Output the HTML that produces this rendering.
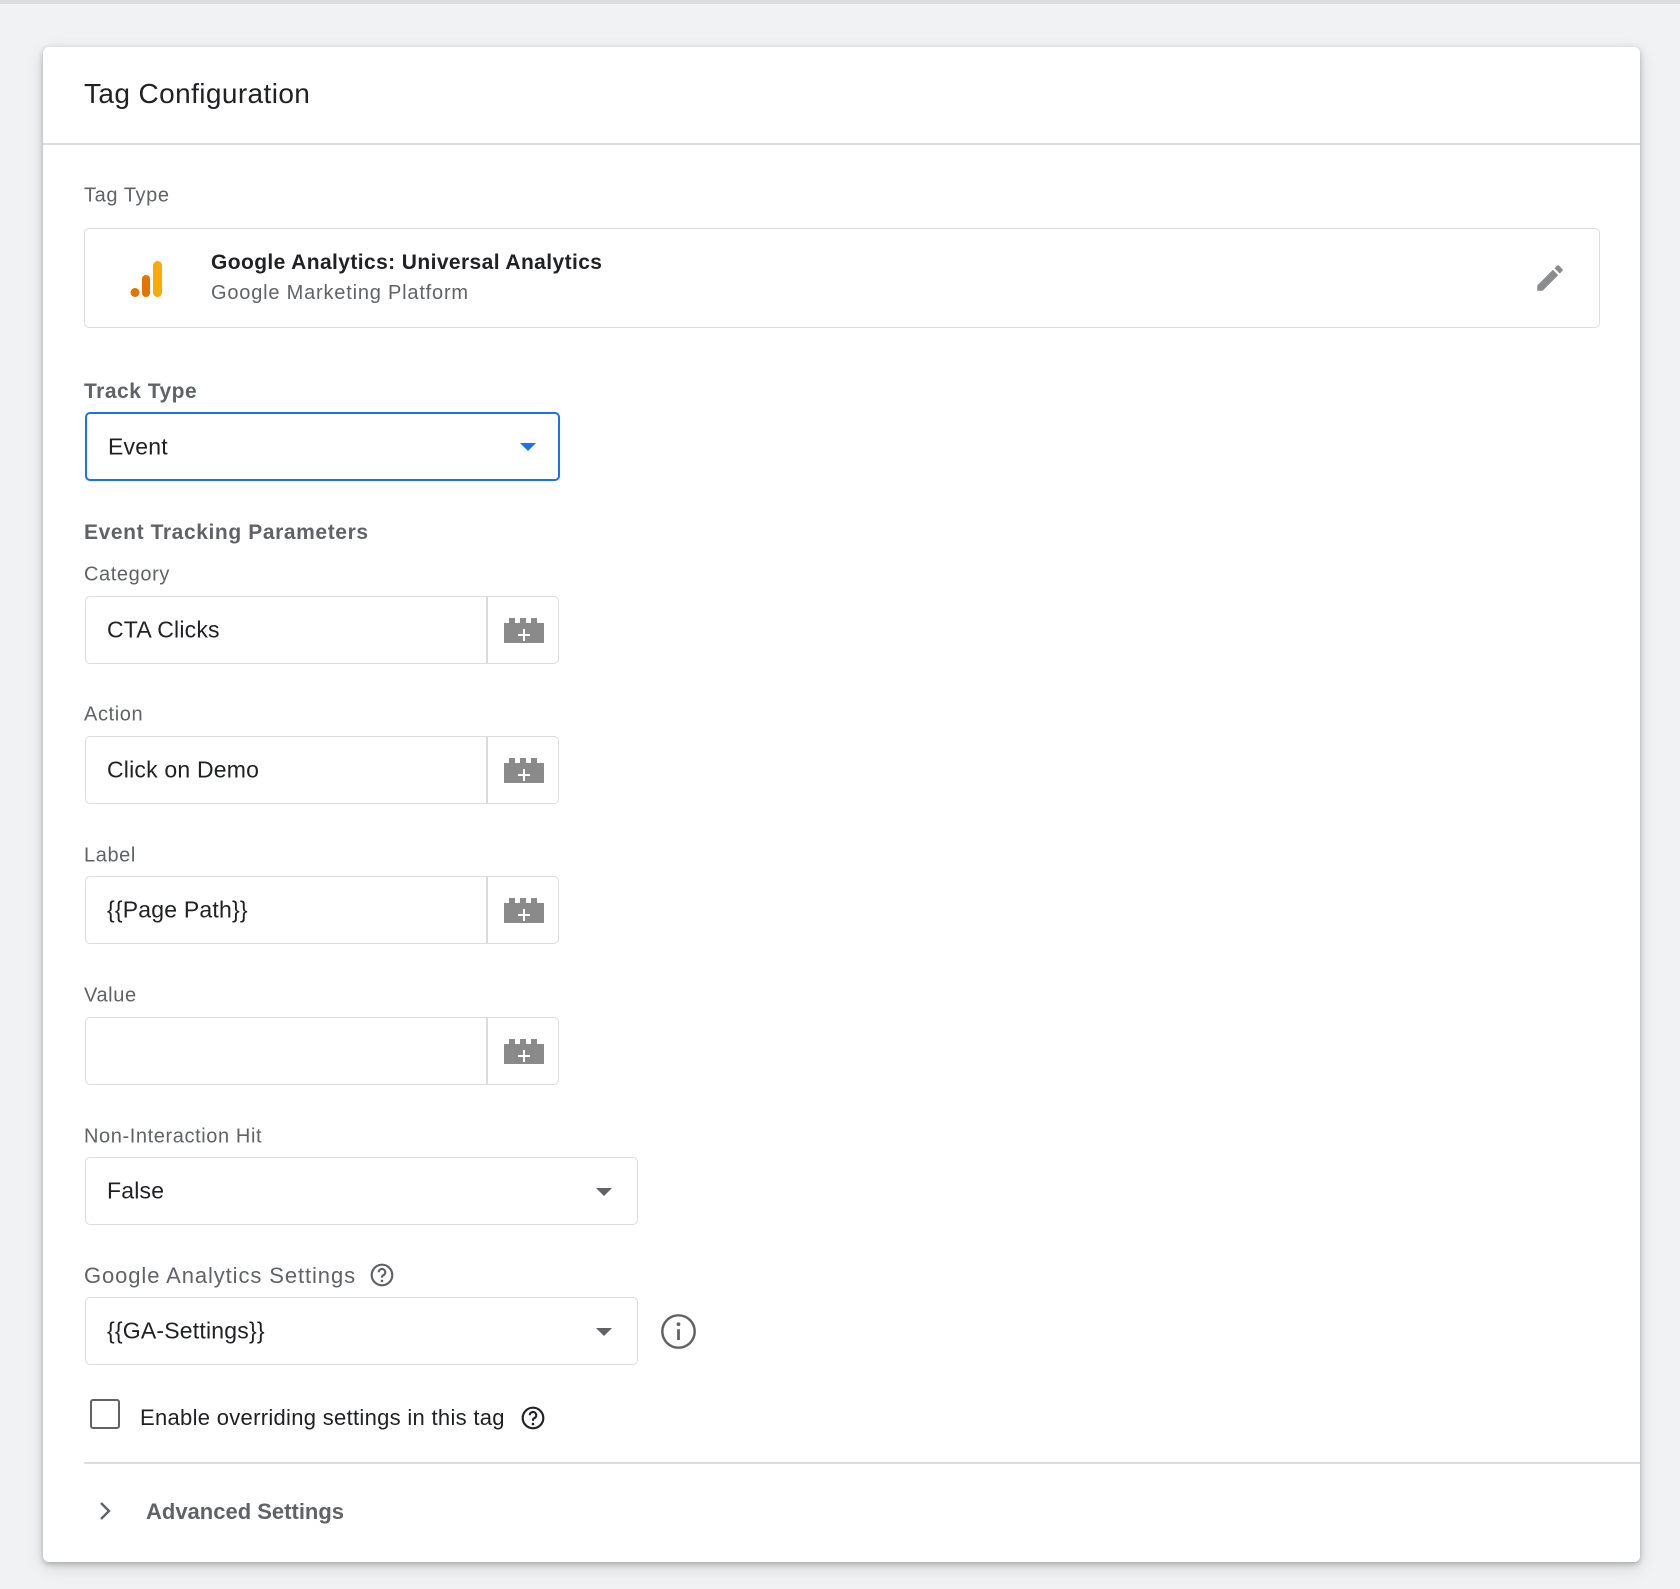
<!DOCTYPE html>
<html><head><meta charset="utf-8"><style>
*{box-sizing:border-box;margin:0;padding:0}
body{width:1680px;height:1589px;background:#f1f2f4;font-family:"Liberation Sans",Arial,sans-serif;position:relative;overflow:hidden;color:#202124}
.topline{position:absolute;left:0;top:0;width:1680px;height:4px;background:#dcdde0}
.card{position:absolute;left:43px;top:47px;width:1597px;height:1515px;background:#fff;border-radius:6px;box-shadow:0 2px 6px rgba(0,0,0,.25),0 6px 18px rgba(0,0,0,.12)}
.a{position:absolute;white-space:nowrap}
.lbl{font-size:20px;color:#5f6368;transform:translateY(-50%);letter-spacing:.6px;margin-top:2px}
.box{position:absolute;border:1.5px solid #dadce0;border-radius:5px;background:#fff}
.val{position:absolute;left:21px;top:50%;transform:translateY(-50%);font-size:23px;color:#202124;letter-spacing:.2px}
.plus{position:absolute;top:0;bottom:0;width:1.5px;background:#dadce0}
</style></head><body>
<div class="topline"></div>
<div class="card"></div>
<div class="a" style="left:84px;top:78px;font-size:28px;color:#202124;letter-spacing:.4px">Tag Configuration</div>
<div class="a" style="left:43px;top:143px;width:1597px;height:1.5px;background:#dadce0"></div>
<div class="a lbl" style="left:84px;top:194px">Tag Type</div>
<div class="box" style="left:84px;top:228px;width:1516px;height:100px">
 <svg style="position:absolute;left:45px;top:30px" width="36" height="40" viewBox="0 0 36 40"><rect x="23" y="2" width="9" height="36" rx="4.5" fill="#f9ab00"/><rect x="12" y="16" width="8" height="22" rx="4" fill="#e37400"/><circle cx="5" cy="33.5" r="4.5" fill="#e37400"/></svg>
 <div class="a" style="left:126px;top:22px;font-size:21px;font-weight:bold;color:#202124;letter-spacing:.4px">Google Analytics: Universal Analytics</div>
 <div class="a" style="left:126px;top:53px;font-size:20px;color:#5f6368;letter-spacing:.8px">Google Marketing Platform</div>
 <svg style="position:absolute;left:1448px;top:32px" width="34" height="34" viewBox="0 0 24 24"><path d="M3 17.25V21h3.75L17.81 9.940l-3.75-3.75L3 17.25zM20.71 7.04a1 1 0 0 0 0-1.41l-2.34-2.340a1 1 0 0 0-1.41 0l-1.83 1.83 3.75 3.75 1.83-1.83z" fill="#8a8c8f"/></svg>
</div>
<div class="a lbl" style="left:84px;top:390px;font-size:21px;font-weight:bold;color:#5f6368;letter-spacing:.5px">Track Type</div>
<div class="box" style="left:85px;top:412px;width:475px;height:69px;border:2.5px solid #1a73e8">
 <div class="val">Event</div>
 <div class="a" style="left:433px;top:29px;width:0;height:0;border-left:8px solid transparent;border-right:8px solid transparent;border-top:8px solid #1a73e8"></div>
</div>
<div class="a lbl" style="left:84px;top:531px;font-size:21px;font-weight:bold;color:#5f6368;letter-spacing:.6px">Event Tracking Parameters</div>

<div class="a lbl" style="left:84px;top:573px">Category</div>
<div class="box" style="left:85px;top:596px;width:474px;height:68px"><div class="val">CTA Clicks</div><div class="plus" style="left:400px"></div>
<svg style="position:absolute;left:418px;top:21px" width="40" height="26" viewBox="0 0 40 26"><path d="M0 5h5V0h6v5h5V0h6v5h5V0h6v5h7v20H0z" fill="#8a8a8a"/><path d="M20 11v12M14 17h12" stroke="#fff" stroke-width="2"/></svg></div>

<div class="a lbl" style="left:84px;top:713px">Action</div>
<div class="box" style="left:85px;top:736px;width:474px;height:68px"><div class="val">Click on Demo</div><div class="plus" style="left:400px"></div>
<svg style="position:absolute;left:418px;top:21px" width="40" height="26" viewBox="0 0 40 26"><path d="M0 5h5V0h6v5h5V0h6v5h5V0h6v5h7v20H0z" fill="#8a8a8a"/><path d="M20 11v12M14 17h12" stroke="#fff" stroke-width="2"/></svg></div>

<div class="a lbl" style="left:84px;top:854px">Label</div>
<div class="box" style="left:85px;top:876px;width:474px;height:68px"><div class="val">{{Page Path}}</div><div class="plus" style="left:400px"></div>
<svg style="position:absolute;left:418px;top:21px" width="40" height="26" viewBox="0 0 40 26"><path d="M0 5h5V0h6v5h5V0h6v5h5V0h6v5h7v20H0z" fill="#8a8a8a"/><path d="M20 11v12M14 17h12" stroke="#fff" stroke-width="2"/></svg></div>

<div class="a lbl" style="left:84px;top:994px">Value</div>
<div class="box" style="left:85px;top:1017px;width:474px;height:68px"><div class="plus" style="left:400px"></div>
<svg style="position:absolute;left:418px;top:21px" width="40" height="26" viewBox="0 0 40 26"><path d="M0 5h5V0h6v5h5V0h6v5h5V0h6v5h7v20H0z" fill="#8a8a8a"/><path d="M20 11v12M14 17h12" stroke="#fff" stroke-width="2"/></svg></div>

<div class="a lbl" style="left:84px;top:1135px">Non-Interaction Hit</div>
<div class="box" style="left:85px;top:1157px;width:553px;height:68px"><div class="val">False</div>
<div class="a" style="left:510px;top:30px;width:0;height:0;border-left:8px solid transparent;border-right:8px solid transparent;border-top:8px solid #5f6368"></div></div>

<div class="a lbl" style="left:84px;top:1274px;font-size:22px;letter-spacing:.9px">Google Analytics Settings</div>
<svg style="position:absolute;left:369px;top:1262px" width="26" height="26" viewBox="0 0 24 24"><circle cx="12" cy="12" r="9.5" fill="none" stroke="#5f6368" stroke-width="2"/><path d="M9 9.5a3 3 0 1 1 4.2 2.7c-.8.4-1.2 1-1.2 1.8v.5" fill="none" stroke="#5f6368" stroke-width="2"/><circle cx="12" cy="17.5" r="1.2" fill="#5f6368"/></svg>
<div class="box" style="left:85px;top:1297px;width:553px;height:68px"><div class="val">{{GA-Settings}}</div>
<div class="a" style="left:510px;top:30px;width:0;height:0;border-left:8px solid transparent;border-right:8px solid transparent;border-top:8px solid #5f6368"></div></div>
<svg style="position:absolute;left:660px;top:1313px" width="37" height="37" viewBox="0 0 24 24"><circle cx="12" cy="12" r="10.5" fill="none" stroke="#5f6368" stroke-width="1.6"/><path d="M12 10.5v7" stroke="#5f6368" stroke-width="1.8"/><circle cx="12" cy="7.3" r="1.2" fill="#5f6368"/></svg>

<div class="a" style="left:90px;top:1399px;width:30px;height:30px;border:2.5px solid #5f6368;border-radius:3px"></div>
<div class="a" style="left:140px;top:1405px;font-size:22px;color:#202124;letter-spacing:.3px">Enable overriding settings in this tag</div>
<svg style="position:absolute;left:520px;top:1405px" width="26" height="26" viewBox="0 0 24 24"><circle cx="12" cy="12" r="9.5" fill="none" stroke="#202124" stroke-width="2"/><path d="M9 9.5a3 3 0 1 1 4.2 2.7c-.8.4-1.2 1-1.2 1.8v.5" fill="none" stroke="#202124" stroke-width="2"/><circle cx="12" cy="17.5" r="1.2" fill="#202124"/></svg>

<div class="a" style="left:84px;top:1462px;width:1556px;height:1.5px;background:#dadce0"></div>
<svg style="position:absolute;left:98px;top:1500px" width="14" height="22" viewBox="0 0 14 22"><path d="M3 3l8 8-8 8" fill="none" stroke="#5f6368" stroke-width="2.4"/></svg>
<div class="a" style="left:146px;top:1499px;font-size:22px;font-weight:bold;color:#5f6368">Advanced Settings</div>
</body></html>
